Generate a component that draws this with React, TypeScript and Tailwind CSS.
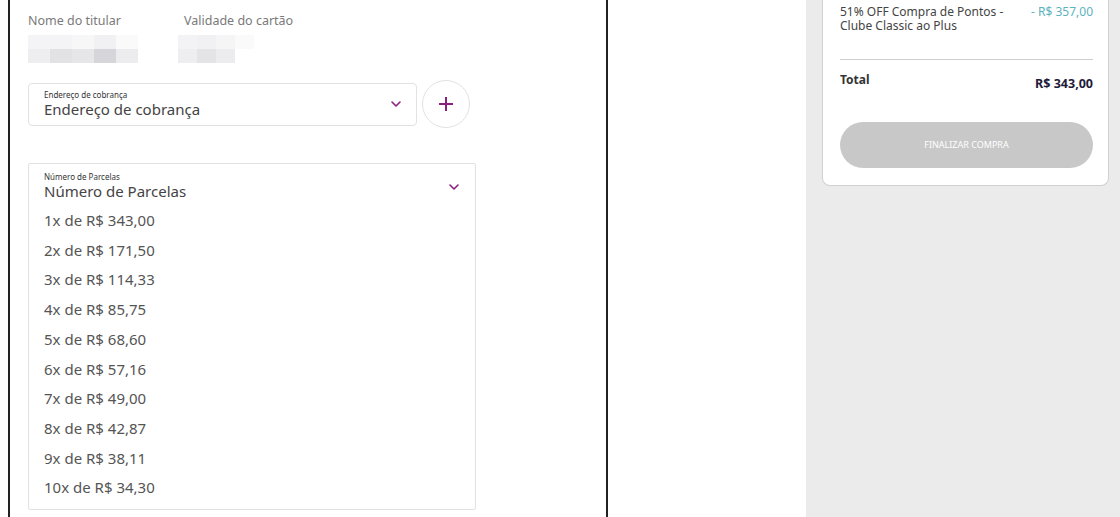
import React from "react";

const installments = [
  "1x de R$ 343,00",
  "2x de R$ 171,50",
  "3x de R$ 114,33",
  "4x de R$ 85,75",
  "5x de R$ 68,60",
  "6x de R$ 57,16",
  "7x de R$ 49,00",
  "8x de R$ 42,87",
  "9x de R$ 38,11",
  "10x de R$ 34,30",
];

// pixelated blur blocks (censored values)
const nameBlur = [
  ["bg-[#f4f4f6]", "bg-[#f4f4f6]", "bg-[#f7f7f8]", "bg-[#f1f1f3]", "bg-[#fafafa]"],
  ["bg-[#eeeef0]", "bg-[#e2e2e5]", "bg-[#e6e6e9]", "bg-[#d6d6da]", "bg-[#ececee]"],
];
const dateBlur = [
  ["bg-[#f3f3f5]", "bg-[#f1f1f3]", "bg-[#f5f5f6]", "bg-[#fafafa]"],
  ["bg-[#eeeef0]", "bg-[#e4e4e7]", "bg-[#ececee]", "bg-white"],
];

function Chevron() {
  return (
    <svg width="12" height="8" viewBox="0 0 12 8" fill="none">
      <path d="M2 2l4 4 4-4" stroke="#8b1f7f" strokeWidth="1.6" strokeLinecap="round" strokeLinejoin="round" />
    </svg>
  );
}

function Blur({ rows, cell }: { rows: string[][]; cell: string }) {
  return (
    <div className="flex flex-col">
      {rows.map((r, i) => (
        <div key={i} className="flex">
          {r.map((c, j) => (
            <div key={j} className={`${cell} ${c}`} />
          ))}
        </div>
      ))}
    </div>
  );
}

export default function App() {
  return (
    <div
      className="flex w-[1120px] h-[517px] overflow-hidden bg-white"
      style={{ fontFamily: '"Noto Sans", "Open Sans", sans-serif' }}
    >
      {/* left form area */}
      <div className="w-[806px] shrink-0 pl-[8px]">
        <div className="w-[600px] h-full border-x-2 border-[#222] pl-[18px] pt-[12px]">
          <div className="flex gap-[46px]">
            <div className="flex flex-col gap-[5px]">
              <span className="text-[12.5px] text-[#7a7a7a] leading-[18px]">Nome do titular</span>
              <Blur rows={nameBlur} cell="w-[22px] h-[14px]" />
            </div>
            <div className="flex flex-col gap-[5px]">
              <span className="text-[12.5px] text-[#7a7a7a] leading-[18px]">Validade do cartão</span>
              <div className="-ml-[6px]">
                <Blur rows={dateBlur} cell="w-[19px] h-[14px]" />
              </div>
            </div>
          </div>

          <div className="flex items-center gap-[5px] mt-[17px]">
            <div className="w-[389px] h-[43px] border border-[#e2e2e2] rounded-[4px] flex items-center justify-between pl-[15px] pr-[14px]">
              <div className="flex flex-col">
                <span className="text-[8px] leading-[9px] text-[#333]">Endereço de cobrança</span>
                <span className="text-[15px] leading-[20px] text-[#444]">Endereço de cobrança</span>
              </div>
              <Chevron />
            </div>
            <div className="w-[48px] h-[48px] rounded-full border border-[#e2e2e2] flex items-center justify-center">
              <svg width="16" height="16" viewBox="0 0 16 16">
                <path d="M8 1v14M1 8h14" stroke="#8b1f7f" strokeWidth="2" />
              </svg>
            </div>
          </div>

          <div className="w-[448px] mt-[35px] border border-[#e2e2e2] rounded-[2px] pl-[15px] pr-[15px] pt-[8px] pb-[6px]">
            <div className="flex items-center justify-between">
              <div className="flex flex-col">
                <span className="text-[8px] leading-[9px] text-[#333]">Número de Parcelas</span>
                <span className="text-[15px] leading-[20px] text-[#444]">Número de Parcelas</span>
              </div>
              <Chevron />
            </div>
            <div className="flex flex-col mt-[5px]">
              {installments.map((t) => (
                <span key={t} className="text-[15px] leading-[29.7px] text-[#555]">
                  {t}
                </span>
              ))}
            </div>
          </div>
        </div>
      </div>

      {/* right summary */}
      <div className="flex-1 bg-[#ebebeb] pl-[16px] pr-[11px]">
        <div className="w-[287px] bg-white border border-t-0 border-[#d0d0d0] rounded-b-[8px] pl-[17px] pr-[15px] pt-[5px] pb-[17px]">
          <div className="flex justify-between text-[12px] leading-[14px]">
            <span className="text-[#444] w-[170px]">51% OFF Compra de Pontos - Clube Classic ao Plus</span>
            <span className="text-[#5bb3bd]">- R$ 357,00</span>
          </div>
          <div className="h-px bg-[#cfcfcf] mt-[26px]" />
          <div className="flex justify-between mt-[13px]">
            <span className="text-[12px] font-bold text-[#333] leading-[14px]">Total</span>
            <span className="text-[12.5px] font-bold text-[#1e1b3a] leading-[14px] mt-[4px]">R$ 343,00</span>
          </div>
          <div className="mt-[31px] h-[46px] rounded-full bg-[#c8c8c8] flex items-center justify-center">
            <span className="text-[9px] text-white">FINALIZAR COMPRA</span>
          </div>
        </div>
      </div>
    </div>
  );
}
